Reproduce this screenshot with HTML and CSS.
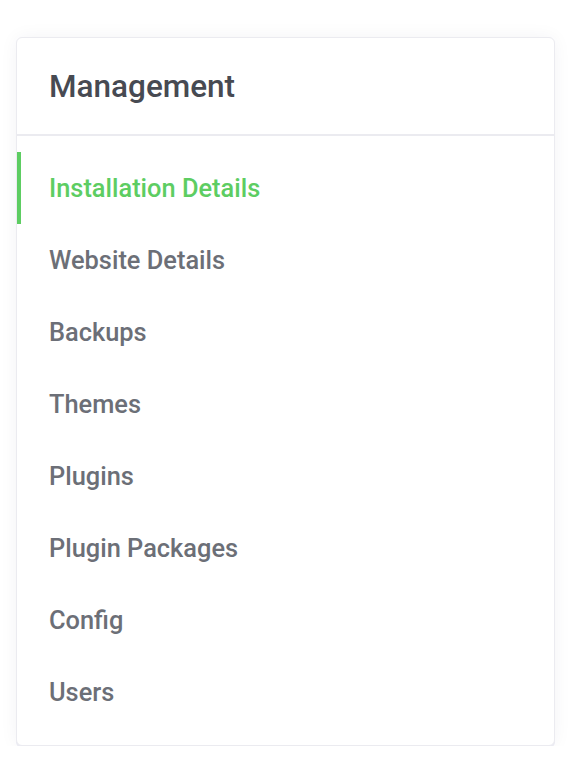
FILE: index.html
```html
<!DOCTYPE html>
<html>
<head>
  <title>Management</title>
  <meta charset="UTF-8">
  <meta name="viewport" content="width=device-width, initial-scale=1.0">
  <link rel="stylesheet" href="styles.css">
</head>
<body>
  <div class="card">
    <div class="card-header">
      <h2>Management</h2>
    </div>
    <ul class="menu">
      <li class="active"><a href="#">Installation Details</a></li>
      <li><a href="#">Website Details</a></li>
      <li><a href="#">Backups</a></li>
      <li><a href="#">Themes</a></li>
      <li><a href="#">Plugins</a></li>
      <li><a href="#">Plugin Packages</a></li>
      <li><a href="#">Config</a></li>
      <li><a href="#">Users</a></li>
    </ul>
  </div>
</body>
</html>
```

FILE: styles.css
```css
body { font-family: Roboto, "Liberation Sans", sans-serif; margin: 0; padding: 37px 25px 0 16px; background: #fff; }
.card { background: #fff; border: 1px solid #ebebf0; border-radius: 6px; box-shadow: 0 2px 0 #ebebf2, 0 0 18px rgba(40, 40, 80, 0.05); }
.card-header { height: 96px; display: flex; align-items: center; padding: 0 32px; border-bottom: 2px solid #ebebf0; }
.card-header h2 { margin: 0; font-size: 31.5px; font-weight: 500; color: #474a52; }
.menu { list-style: none; margin: 0; padding: 16px 0 17px; }
.menu li { height: 72px; display: flex; align-items: center; border-left: 4px solid transparent; }
.menu a { padding-left: 28px; font-size: 25.4px; font-weight: 500; color: #6c6f77; text-decoration: none; }
.menu li.active { border-left-color: #5dcd62; }
.menu li.active a { color: #5dcd62; }
```
